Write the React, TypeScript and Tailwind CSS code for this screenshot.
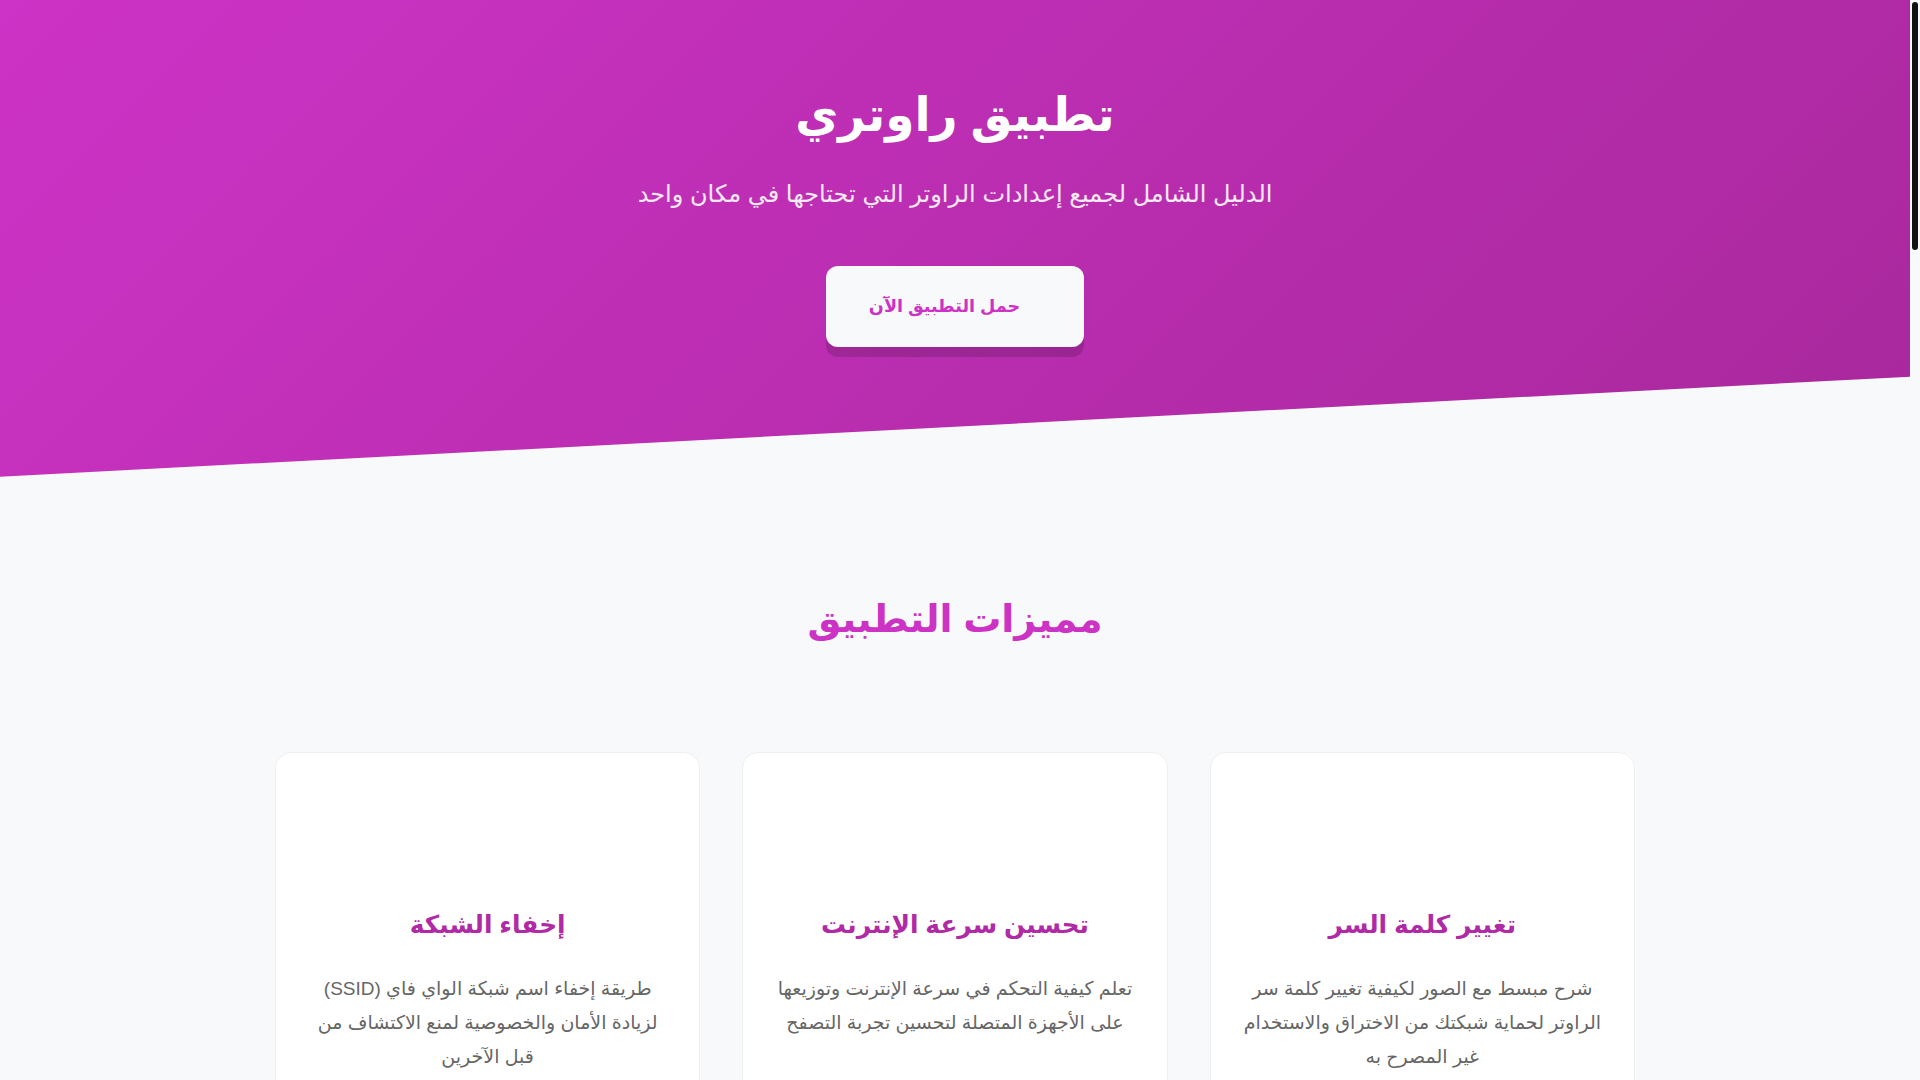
import React from 'react';

const features = [
  {
    title: 'إخفاء الشبكة',
    text: 'طريقة إخفاء اسم شبكة الواي فاي (SSID) لزيادة الأمان والخصوصية لمنع الاكتشاف من قبل الآخرين',
  },
  {
    title: 'تحسين سرعة الإنترنت',
    text: 'تعلم كيفية التحكم في سرعة الإنترنت وتوزيعها على الأجهزة المتصلة لتحسين تجربة التصفح',
  },
  {
    title: 'تغيير كلمة السر',
    text: 'شرح مبسط مع الصور لكيفية تغيير كلمة سر الراوتر لحماية شبكتك من الاختراق والاستخدام غير المصرح به',
  },
  {
    title: 'حظر الأجهزة',
    text: 'تعرف على طريقة حظر الأجهزة غير المرغوب فيها من الاتصال بشبكتك بخطوات سهلة وسريعة',
  },
  {
    title: 'إعادة ضبط المصنع',
    text: 'خطوات إعادة الراوتر إلى إعدادات المصنع وحل المشاكل الشائعة التي قد تواجهك',
  },
  {
    title: 'معرفة المتصلين',
    text: 'اكتشف الأجهزة المتصلة بشبكتك حالياً ومعرفة من يستخدم الإنترنت الخاص بك',
  },
];

const steps = [
  { n: '١', title: 'حمل التطبيق', text: 'قم بتحميل التطبيق مجاناً على هاتفك' },
  { n: '٢', title: 'اختر الراوتر', text: 'حدد نوع الراوتر الخاص بك من القائمة' },
  { n: '٣', title: 'اتبع الشرح', text: 'طبق الخطوات المصورة بكل سهولة' },
];

const faqs = [
  { q: 'هل التطبيق مجاني؟', a: 'نعم، التطبيق مجاني بالكامل ويمكن تحميله من المتجر مباشرة.' },
  { q: 'هل يدعم جميع أنواع الراوترات؟', a: 'يدعم التطبيق أشهر أنواع الراوترات المستخدمة في الوطن العربي.' },
  { q: 'هل أحتاج إلى خبرة تقنية؟', a: 'لا، الشرح مبسط ومدعوم بالصور ليناسب جميع المستخدمين.' },
  { q: 'هل يعمل التطبيق بدون إنترنت؟', a: 'يمكنك تصفح الشروحات المحفوظة بدون اتصال بالإنترنت.' },
];

function FeatureCard({ title, text }: { title: string; text: string }) {
  return (
    <div dir="rtl" className="bg-white border border-[#eeeff1] rounded-2xl px-8 pt-8 pb-10 text-center">
      <div className="h-20 mb-[44px]" />
      <h3 className="text-[24.8px] leading-[1.3] font-bold text-[#b02aa5] mb-[31px]">{title}</h3>
      <p className="text-[19px] leading-[1.77] text-[#666]">{text}</p>
    </div>
  );
}

export default function App() {
  return (
    <div dir="ltr" className="h-screen flex bg-[#f8f9fa] font-['Liberation_Sans','DejaVu_Sans',sans-serif]">
      <main dir="rtl" className="flex-1 min-w-0 overflow-y-auto [scrollbar-width:none]">
        {/* Hero */}
        <header className="bg-linear-135 from-[#cd33c6] to-[#a8289c] [clip-path:polygon(0_0,100%_0,100%_79%,0_100%)] pt-[87px] pb-[130px] text-center text-white">
          <h1 className="text-[47px] leading-[1.2] font-bold">تطبيق راوتري</h1>
          <p className="mt-[32px] text-2xl leading-[1.6] text-white/90">الدليل الشامل لجميع إعدادات الراوتر التي تحتاجها في مكان واحد</p>
          <div className="mt-[52px] flex justify-center">
            <button className="h-[81px] px-[43px] flex items-center gap-[5px] rounded-xl bg-[#f8f9fa] text-[#cc33c4] text-[17.6px] font-bold shadow-[0_10px_0_rgba(0,0,0,0.15)]">
              <span className="w-4" />
              حمل التطبيق الآن
            </button>
          </div>
        </header>

        {/* Features */}
        <section className="pt-[118px] pb-[100px]">
          <h2 className="text-center text-[38px] leading-[1.3] font-bold text-[#cc33c4]">مميزات التطبيق</h2>
          <div dir="ltr" className="mt-[108px] max-w-[1360px] mx-auto grid grid-cols-3 gap-[42px]">
            {features.map((f) => (
              <FeatureCard key={f.title} title={f.title} text={f.text} />
            ))}
          </div>
        </section>

        {/* How it works */}
        <section className="py-[100px] bg-white">
          <h2 className="text-center text-[38px] leading-[1.3] font-bold text-[#cc33c4]">كيف يعمل التطبيق</h2>
          <div className="mt-20 max-w-[1360px] mx-auto grid grid-cols-3 gap-[42px]">
            {steps.map((s) => (
              <div key={s.n} className="text-center p-10">
                <div className="mx-auto w-20 h-20 rounded-full bg-linear-135 from-[#cd33c6] to-[#a8289c] text-white text-[32px] font-bold flex items-center justify-center">{s.n}</div>
                <h3 className="mt-8 text-[24.8px] font-bold text-[#b02aa5]">{s.title}</h3>
                <p className="mt-4 text-[19px] leading-[1.77] text-[#666]">{s.text}</p>
              </div>
            ))}
          </div>
        </section>

        {/* FAQ */}
        <section className="py-[100px]">
          <h2 className="text-center text-[38px] leading-[1.3] font-bold text-[#cc33c4]">الأسئلة الشائعة</h2>
          <div className="mt-20 max-w-[900px] mx-auto flex flex-col gap-6">
            {faqs.map((f) => (
              <div key={f.q} className="bg-white border border-[#eeeff1] rounded-2xl p-8">
                <h3 className="text-[22px] font-bold text-[#b02aa5]">{f.q}</h3>
                <p className="mt-3 text-[19px] leading-[1.77] text-[#666]">{f.a}</p>
              </div>
            ))}
          </div>
        </section>

        {/* Download */}
        <section className="py-[120px] bg-linear-135 from-[#cd33c6] to-[#a8289c] text-center text-white">
          <h2 className="text-[38px] leading-[1.3] font-bold">ابدأ الآن مجاناً</h2>
          <p className="mt-6 text-2xl leading-[1.6] text-white/90">حمل التطبيق وتحكم في شبكتك بسهولة</p>
          <div className="mt-12 flex justify-center">
            <button className="h-[81px] px-[43px] rounded-xl bg-[#f8f9fa] text-[#cc33c4] text-[17.6px] font-bold shadow-[0_10px_0_rgba(0,0,0,0.15)]">
              حمل التطبيق الآن
            </button>
          </div>
        </section>

        {/* Footer */}
        <footer className="bg-[#222] text-[#bbb] text-center py-16">
          <p className="text-2xl font-bold text-white">تطبيق راوتري</p>
          <p className="mt-4 text-base">جميع الحقوق محفوظة © 2024</p>
        </footer>
      </main>

      {/* scrollbar gutter */}
      <aside className="w-[10px] shrink-0 bg-[#f8f9fa]">
        <div className="mt-[2px] mx-[2px] h-[248px] rounded-full bg-[#111]" />
      </aside>
    </div>
  );
}
